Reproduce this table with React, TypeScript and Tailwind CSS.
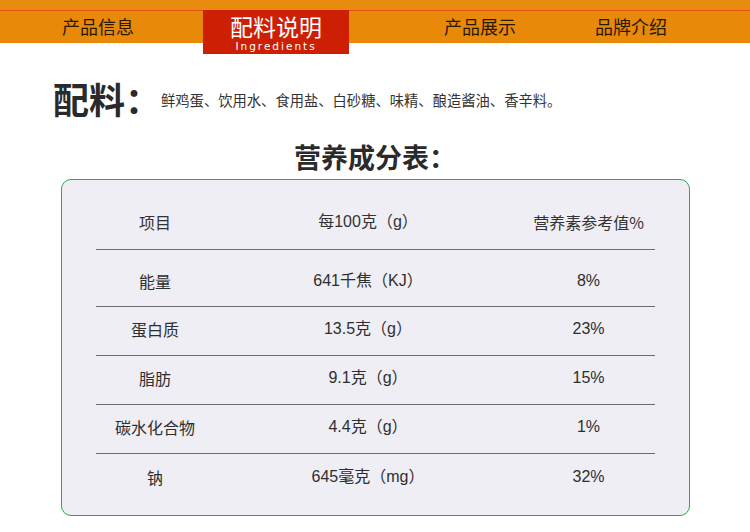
import React from 'react'

const cjk = { fontFamily: '"Noto Sans CJK SC", "Liberation Sans", sans-serif' }
const num = { fontFamily: '"Liberation Sans", "Noto Sans CJK SC", sans-serif' }

const rows = [
  { name: '能量', per: '641千焦（KJ）', nrv: '8%' },
  { name: '蛋白质', per: '13.5克（g）', nrv: '23%' },
  { name: '脂肪', per: '9.1克（g）', nrv: '15%' },
  { name: '碳水化合物', per: '4.4克（g）', nrv: '1%' },
  { name: '钠', per: '645毫克（mg）', nrv: '32%' },
]

const NavItem: React.FC<{ label: string; width: string }> = ({ label, width }) => (
  <div className={`${width} flex justify-center whitespace-nowrap text-[18px] leading-none text-[#2b1800]`}>
    {label}
  </div>
)

export default function App() {
  return (
    <div className="w-[750px] h-[532px] bg-white overflow-hidden" style={cjk}>
      {/* top nav */}
      <div className="relative">
        <div className="h-[10px] bg-[#e98b0e]" />
        <div className="h-[1px] bg-[#e2501a]" />
        <div className="h-[32px] bg-[#e8890a] flex items-center pb-[2px]">
          <NavItem label="产品信息" width="w-[196px]" />
          <div className="w-[153px]" />
          <NavItem label="产品展示" width="w-[262px]" />
          <NavItem label="品牌介绍" width="w-[40px]" />
        </div>
        <div className="absolute left-[203px] top-[10px] w-[146px] h-[44px] bg-[#cc1f04] flex flex-col items-center text-white">
          <div className="text-[23px] leading-[23px] mt-[5px]">配料说明</div>
          <div className="text-[10.5px] leading-[11px] mt-[3px] tracking-[2px]" style={{ fontFamily: '"DejaVu Sans", sans-serif' }}>
            Ingredients
          </div>
        </div>
      </div>

      {/* ingredients */}
      <div className="flex items-center pl-[53px] mt-[35px] h-[40px]">
        <span className="text-[36px] font-bold leading-none text-[#2a2a2a]">配料：</span>
        <span className="text-[14.3px] leading-none text-[#333] mt-[4px]">
          鲜鸡蛋、饮用水、食用盐、白砂糖、味精、酿造酱油、香辛料。
        </span>
      </div>

      {/* title */}
      <div className="flex justify-center mt-[25px]">
        <span className="text-[27px] font-bold leading-none text-[#2a2a2a]">营养成分表：</span>
      </div>

      {/* card */}
      <div className="ml-[61px] mt-[9px] w-[629px] h-[337px] rounded-[10px] border border-[#2ea84a] bg-[#eeeef4] pl-[34px]">
        <div className="w-[559px]">
          <div className="flex h-[70px] items-end pb-[19px] border-b border-[#2a9a48] text-[16px] leading-none text-[#333]">
            <div className="w-[118px] text-center">项目</div>
            <div className="w-[308px] text-center" style={num}>每100克（g）</div>
            <div className="w-[133px] text-center">营养素参考值%</div>
          </div>
          {rows.map((r, i) => (
            <div
              key={r.name}
              className={`flex items-center text-[16px] leading-none text-[#2e2e2e] ${
                i === 0 ? 'h-[57px] pt-[6px]' : 'h-[49px] pb-[4px]'
              } ${i < rows.length - 1 ? 'border-b border-[#6b6b73]' : ''}`}
            >
              <div className="w-[118px] text-center">{r.name}</div>
              <div className="w-[308px] text-center" style={num}>{r.per}</div>
              <div className="w-[133px] text-center" style={num}>{r.nrv}</div>
            </div>
          ))}
        </div>
      </div>
    </div>
  )
}
